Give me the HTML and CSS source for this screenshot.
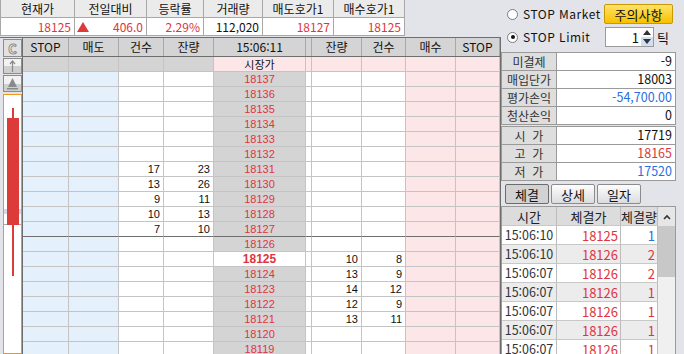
FILE: index.html
```html
<!DOCTYPE html>
<html lang="ko">
<head>
    <meta charset="UTF-8">
    <meta name="viewport" content="width=device-width, initial-scale=1.0">
    <title>STOP 호가</title>
    <link rel="stylesheet" href="styles.css">
</head>
<body>
<div class="app">
    <div class="left">
        <div class="quote">
            <div class="th">현재가</div>
            <div class="th">전일대비</div>
            <div class="th">등락률</div>
            <div class="th">거래량</div>
            <div class="th">매도호가1</div>
            <div class="th">매수호가1</div>
            <div class="td up">18125</div>
            <div class="td up diff">
                <svg width="12" height="10" viewBox="0 0 12 10"><polygon points="6,0 12,10 0,10" fill="#dd3a3a"/></svg>
                <span>406.0</span>
            </div>
            <div class="td up">2.29%</div>
            <div class="td">112,020</div>
            <div class="td up">18127</div>
            <div class="td up">18125</div>
        </div>

        <div class="book">
            <div class="side">
                <div class="tool c">C</div>
                <div class="tool arrow">
                    <svg width="17" height="14" viewBox="0 0 17 14"><path d="M8.5 2v11M6 5l2.5-3 2.5 3" stroke="#8a8a8a" stroke-width="1.2" fill="none"/></svg>
                </div>
                <div class="tool tri">
                    <svg width="17" height="15" viewBox="0 0 17 15"><polygon points="8.5,2 13,11 4,11" fill="#8a8a8a"/><rect x="3" y="12" width="11" height="1.5" fill="#8a8a8a"/></svg>
                </div>
                <div class="chart">
                    <svg width="17" height="258" viewBox="0 0 17 258">
                        <rect x="0" y="114" width="17" height="5" fill="#dcd2ee"/>
                        <rect x="0" y="129" width="17" height="1" fill="#a8a8a8"/>
                        <rect x="8" y="13" width="2" height="168" fill="#dd3a3a"/>
                        <rect x="3" y="23" width="12" height="107" fill="#dd3a3a"/>
                    </svg>
                </div>
            </div>

            <div class="grid">
                <div class="row head">
                    <div>STOP</div><div>매도</div><div>건수</div><div>잔량</div><div>15:06:11</div><div></div><div>잔량</div><div>건수</div><div>매수</div><div>STOP</div>
                </div>
                <div class="row market">
                    <div></div><div></div><div></div><div></div><div>시장가</div><div></div><div></div><div></div><div></div><div></div>
                </div>
                <div id="levels"></div>
            </div>
        </div>
    </div>

    <div class="panel">
        <div class="opts">
            <div class="opt">
                <span class="radio"></span>
                <span class="name">STOP Market</span>
                <div class="warn">주의사항</div>
            </div>
            <div class="opt lim">
                <span class="radio on"></span>
                <span class="name">STOP Limit</span>
                <div class="spin">
                    <span class="val">1</span>
                    <span class="arrows">
                        <svg width="12" height="18" viewBox="0 0 12 18"><rect x="0" y="9" width="12" height="9" fill="#cfe0f4"/><polygon points="6,2 10,7 2,7" fill="#333"/><polygon points="2,11 10,11 6,16" fill="#333"/></svg>
                    </span>
                </div>
                <span class="tick">틱</span>
            </div>
        </div>

        <div class="info">
            <div class="lb">미결제</div><div class="vl">-9</div>
            <div class="lb">매입단가</div><div class="vl">18003</div>
            <div class="lb">평가손익</div><div class="vl down">-54,700.00</div>
            <div class="lb">청산손익</div><div class="vl">0</div>
        </div>
        <div class="info second">
            <div class="lb">시&nbsp;&nbsp;가</div><div class="vl">17719</div>
            <div class="lb">고&nbsp;&nbsp;가</div><div class="vl up">18165</div>
            <div class="lb">저&nbsp;&nbsp;가</div><div class="vl down">17520</div>
        </div>

        <div class="tabs">
            <div class="tab active">체결</div>
            <div class="tab">상세</div>
            <div class="tab">일자</div>
        </div>

        <div class="trades">
            <div class="ttable" id="trades">
                <div class="th">시간</div><div class="th">체결가</div><div class="th">체결량</div>
            </div>
            <div class="scroll">
                <div class="sup">
                    <svg width="10" height="8" viewBox="0 0 10 8"><path d="M2 6l3-3 3 3" stroke="#333" stroke-width="1.6" fill="none"/></svg>
                </div>
                <div class="thumb"></div>
            </div>
        </div>
    </div>
</div>

<script>
    const ask = { 18131: [17, 23], 18130: [13, 26], 18129: [9, 11], 18128: [10, 13], 18127: [7, 10] };
    const bid = { 18125: [10, 8], 18124: [13, 9], 18123: [14, 12], 18122: [12, 9], 18121: [13, 11] };

    let html = '';
    for (let p = 18137; p >= 18119; p--) {
        const a = ask[p] || ['', ''];
        const b = bid[p] || ['', ''];
        let cls = 'row';
        if (p === 18127) cls += ' split';
        if (p === 18125) cls += ' now';
        html += `<div class="${cls}"><div></div><div></div><div>${a[0]}</div><div>${a[1]}</div><div>${p}</div><div></div><div>${b[0]}</div><div>${b[1]}</div><div></div><div></div></div>`;
    }
    document.getElementById('levels').innerHTML = html;

    const trades = [
        ['15:06:10', 18125, 1, 'down'],
        ['15:06:10', 18126, 2, 'up'],
        ['15:06:07', 18126, 2, 'up'],
        ['15:06:07', 18126, 1, 'up'],
        ['15:06:07', 18126, 1, 'up'],
        ['15:06:07', 18126, 1, 'up'],
        ['15:06:07', 18126, 1, 'up']
    ];
    document.getElementById('trades').insertAdjacentHTML('beforeend', trades.map((t, i) => `
        <div class="${i % 2 ? 'odd' : ''} time">${t[0]}</div>
        <div class="${i % 2 ? 'odd' : ''} up">${t[1]}</div>
        <div class="${i % 2 ? 'odd' : ''} ${t[3]}">${t[2]}</div>
    `).join(''));
</script>
</body>
</html>
```

FILE: styles.css
```css
* { box-sizing: border-box; }
body { margin: 0; width: 684px; height: 354px; overflow: hidden; background: #e3e3ea; font: 12px/1 "Noto Sans CJK KR", sans-serif; color: #111; }
.app { display: flex; }
.left { width: 501px; }

.up { color: #e0353d; }
.down { color: #2a6fe0; }

/* top quote strip */
.quote { display: grid; grid-template-columns: 74px 72px 57px 59px 71px 71px; width: 405px; border-left: 1px solid #a8a8a8; }
.quote > div { height: 18px; border-right: 1px solid #a8a8a8; border-bottom: 1px solid #a8a8a8; display: flex; align-items: center; }
.quote .th { background: #ebebeb; justify-content: center; }
.quote .td { background: #fff; justify-content: flex-end; padding-right: 3px; }
.quote .diff { justify-content: space-between; padding-left: 2px; }

/* order book */
.book { display: flex; margin-top: 1px; border-top: 1px solid #6e6e6e; }
.side { width: 22px; padding: 1px 0 0 3px; display: flex; flex-direction: column; gap: 1px; }
.tool { width: 19px; display: flex; align-items: center; justify-content: center; border: 1px solid #8c8c8c; background: linear-gradient(#f2f2f2 50%, #cfcfcf 50%); }
.tool.c { height: 18px; background: #e2e2e2; color: #fff; font-weight: bold; font-size: 13px; -webkit-text-stroke: 1px #8a8a8a; }
.tool.arrow { height: 16px; }
.tool.tri { height: 17px; }
.chart { width: 20px; height: 261px; margin-top: 1px; background: #fff; border: 1px solid #f0961c; border-width: 1px 2px 2px 1px; }
.chart svg { display: block; }

.grid { width: 479px; border-left: 1px solid #6e6e6e; border-right: 1px solid #6e6e6e; }
.row { display: grid; grid-template-columns: 46px 50px 45px 50px 92px 6px 50px 44px 50px 44px; height: 15px; }
.row > div { background: #fff; border-right: 1px solid #c4c4c4; border-bottom: 1px solid #c4c4c4; text-align: right; padding-right: 3px; font: 11px/14px "Liberation Sans", sans-serif; }
.row > :nth-child(-n+2) { background: #e4f0fc; }
.row > :nth-child(5) { background: #d4d4d4; color: #e0353d; text-align: center; padding: 0; }
.row > :nth-child(n+9) { background: #fce6e8; }
.row.split > div { border-bottom-color: #6e6e6e; }
.row.now > :nth-child(5) { background: #fff; font-weight: bold; font-size: 12px; }

.row.head { height: 19px; border-bottom: 1px solid #6e6e6e; }
.row.head > div { background: #d4d4d4; border-bottom: none; border-right-color: #a8a8a8; text-align: center; padding: 0; font: 12px/18px "Noto Sans CJK KR", sans-serif; color: #111; }
.row.market > div { background: #fce6e8; }
.row.market > :nth-child(-n+4) { background: #d4d4d4; }
.row.market > :nth-child(5) { background: #fce6e8; color: #111; font: 11px/14px "Noto Sans CJK KR", sans-serif; }

/* right panel */
.panel { width: 183px; }
.opts { padding: 4px 11px 0 6px; height: 52px; }
.opt { display: flex; align-items: center; height: 20px; margin-bottom: 3px; }
.opt.lim { padding-right: 5px; }
.opt .name { letter-spacing: 0.5px; }
.radio { width: 11px; height: 11px; border-radius: 50%; border: 1px solid #7c7c7c; background: #fff; margin-right: 5px; position: relative; }
.radio.on::after { content: ""; position: absolute; left: 2.5px; top: 2.5px; width: 4px; height: 4px; border-radius: 50%; background: #111; }
.warn { margin-left: auto; width: 69px; height: 20px; border: 1px solid #c99a00; border-radius: 2px; background: linear-gradient(#ffe26a, #f7c000); display: flex; align-items: center; justify-content: center; font-size: 13px; }
.spin { margin-left: auto; width: 49px; height: 20px; background: #fff; border: 1px solid #9a9a9a; display: flex; align-items: center; }
.spin .val { flex: 1; text-align: right; padding-right: 2px; font-size: 13px; }
.spin .arrows { display: flex; }
.tick { width: 11px; margin-left: 3px; font-size: 13px; }

.info { display: grid; grid-template-columns: 55px 1fr; width: 175px; border: 1px solid #9a9a9a; border-bottom: none; background: #fff; }
.info.second { margin-top: 1px; }
.info > div { height: 18px; border-bottom: 1px solid #9a9a9a; display: flex; align-items: center; font-size: 12px; }
.info .lb { background: #dedede; border-right: 1px solid #9a9a9a; justify-content: center; color: #333; }
.info .vl { justify-content: flex-end; padding-right: 3px; font-size: 12.5px; }

.tabs { display: flex; gap: 2px; padding-left: 4px; margin-top: 3px; }
.tab { width: 44px; height: 20px; border: 1px solid #8c8c8c; border-radius: 2px; background: linear-gradient(#fdfdfd, #dcdcdc); display: flex; align-items: center; justify-content: center; font-size: 13px; }
.tab.active { background: #d2d2d2; border-color: #6c6c6c; }

.trades { display: flex; width: 175px; margin-top: 2px; border: 1px solid #9a9a9a; border-bottom: none; }
.ttable { display: grid; grid-template-columns: 55px 64px 37px; align-content: start; }
.ttable > div { height: 19px; border-right: 1px solid #bcbcbc; border-bottom: 1px solid #c8c8c8; background: #fff; display: flex; align-items: center; justify-content: flex-end; padding-right: 2px; font-size: 13px; }
.ttable > .th { background: #dcdcdc; justify-content: center; padding: 0; color: #222; }
.ttable > .odd { background: #ececec; }
.ttable > .time { justify-content: center; padding: 0; color: #333; font-size: 12.5px; }
.scroll { width: 17px; background: #f0f0f0; }
.sup { height: 19px; display: flex; align-items: center; justify-content: center; background: #e6e6e6; }
.thumb { height: 51px; background: #c8c8c8; }
```
